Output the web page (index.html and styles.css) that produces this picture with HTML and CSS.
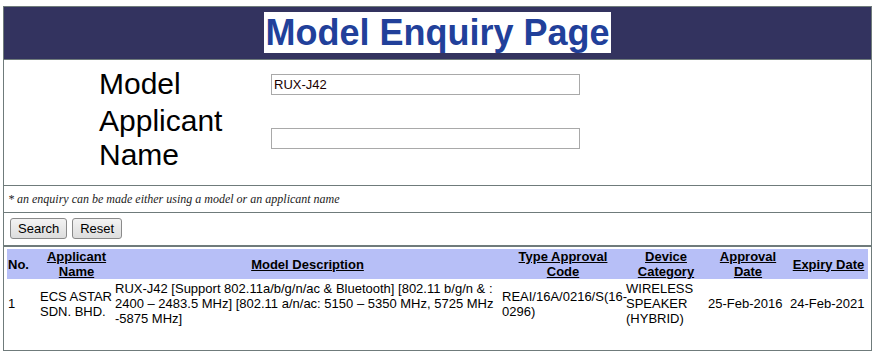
FILE: index.html
```html
<!DOCTYPE html>
<html lang="en">
<head>
  <meta charset="UTF-8">
  <title>Model Enquiry Page</title>
  <link rel="stylesheet" href="styles.css">
</head>
<body>
  <div class="page">
    <div class="page-header">
      <h1 class="page-title">Model Enquiry Page</h1>
    </div>

    <form class="enquiry-form">
      <label class="field-label" for="model">Model</label>
      <div class="field-cell"><input class="field-input" id="model" type="text" value="RUX-J42"></div>
      <label class="field-label" for="applicant">Applicant Name</label>
      <div class="field-cell"><input class="field-input" id="applicant" type="text"></div>
    </form>

    <div class="note">* an enquiry can be made either using a model or an applicant name</div>

    <div class="actions">
      <button class="btn" type="button">Search</button>
      <button class="btn" type="button">Reset</button>
    </div>

    <div class="results">
      <table class="results-table">
        <colgroup>
          <col class="col-no">
          <col class="col-applicant">
          <col class="col-desc">
          <col class="col-code">
          <col class="col-category">
          <col class="col-approval">
          <col class="col-expiry">
        </colgroup>
        <thead>
          <tr>
            <th class="th-left">No.</th>
            <th><a href="#">Applicant Name</a></th>
            <th><a href="#">Model Description</a></th>
            <th><a href="#">Type Approval Code</a></th>
            <th><a href="#">Device Category</a></th>
            <th><a href="#">Approval Date</a></th>
            <th><a href="#">Expiry Date</a></th>
          </tr>
        </thead>
        <tbody>
          <tr>
            <td>1</td>
            <td>ECS ASTAR SDN. BHD.</td>
            <td>RUX-J42 [Support 802.11a/b/g/n/ac &amp; Bluetooth] [802.11 b/g/n &amp; : 2400 – 2483.5 MHz] [802.11 a/n/ac: 5150 – 5350 MHz, 5725 MHz -5875 MHz]</td>
            <td>REAI/16A/0216/S(16-0296)</td>
            <td>WIRELESS SPEAKER (HYBRID)</td>
            <td>25-Feb-2016</td>
            <td>24-Feb-2021</td>
          </tr>
        </tbody>
      </table>
    </div>
  </div>
</body>
</html>
```

FILE: styles.css
```css
* {
  box-sizing: border-box;
}

body {
  margin: 0;
  background: #fff;
  color: #000;
  font-family: 'Liberation Sans', Arial, sans-serif;
  font-size: 13px;
}

.page {
  width: 869px;
  height: 345px;
  margin: 6px 0 0 3px;
  border: 1px solid #6f7b7b;
  display: flex;
  flex-direction: column;
}

.page-header {
  height: 53px;
  background: #33335f;
  border-bottom: 1px solid #6f7b7b;
  display: flex;
  justify-content: center;
  padding-top: 5px;
}

.page-title {
  margin: 0;
  height: 41px;
  padding: 0 1px;
  background: #fff;
  color: #21409a;
  font-size: 36px;
  font-weight: bold;
  line-height: 41px;
}

.enquiry-form {
  display: grid;
  grid-template-columns: 172px 309px;
  align-items: center;
  align-content: start;
  row-gap: 3px;
  padding: 7px 0 0 95px;
  height: 126px;
  border-bottom: 1px solid #6f7b7b;
}

.field-label {
  font-size: 30px;
  line-height: 34px;
  padding-right: 40px;
}

.field-input {
  display: block;
  width: 309px;
  height: 21px;
  border: 1px solid #a9a9a9;
  padding: 0 2px;
  font-family: 'Liberation Sans', Arial, sans-serif;
  font-size: 13px;
  color: #1a0000;
}

.note {
  height: 27px;
  border-bottom: 1px solid #6f7b7b;
  padding: 0 4px;
  display: flex;
  align-items: center;
  font-family: 'Liberation Serif', 'Times New Roman', serif;
  font-style: italic;
  font-size: 12px;
  color: #222;
}

.actions {
  height: 34px;
  border-bottom: 2px solid #6f7b7b;
  padding: 5px 0 0 6px;
  display: flex;
  gap: 5px;
  align-items: flex-start;
}

.btn {
  height: 21px;
  padding: 0 7px;
  border: 1px solid #8a8a8a;
  border-radius: 3px;
  background: linear-gradient(#f3f3f3, #dddddd);
  font-family: 'Liberation Sans', Arial, sans-serif;
  font-size: 13px;
  color: #000;
}

.results {
  flex: 1;
  padding: 2px 3px 0 3px;
}

.results-table {
  width: 100%;
  table-layout: fixed;
  border-collapse: collapse;
}

.col-no { width: 32px; }
.col-applicant { width: 75px; }
.col-desc { width: 387px; }
.col-code { width: 124px; }
.col-category { width: 82px; }
.col-approval { width: 82px; }

.results-table th {
  background: #b7bff7;
  font-weight: bold;
  text-align: center;
  vertical-align: middle;
  padding: 0 1px;
  line-height: 15px;
  height: 30px;
}

.results-table th.th-left {
  text-align: left;
}

.results-table th a {
  color: #000;
  text-decoration: underline;
}

.results-table td {
  vertical-align: middle;
  padding: 2px 1px 0 1px;
  line-height: 15px;
}
```
